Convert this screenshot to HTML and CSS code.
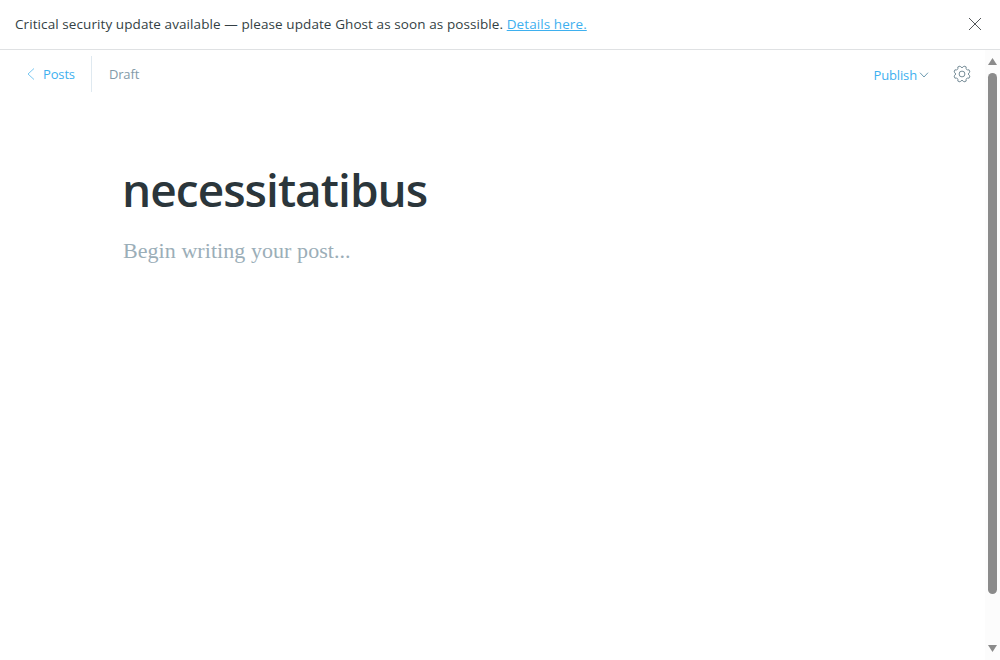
FILE: index.html
```html
<!DOCTYPE html>
<html lang="en">
<head>
<meta charset="utf-8">
<title>Editor</title>
<link rel="stylesheet" href="styles.css">
</head>
<body>
<aside class="alert">
  <div class="alert-text">Critical security update available — please update Ghost as soon as possible. <a class="alert-link" href="#">Details here.</a></div>
  <button class="icon-button close" aria-label="Close">
    <svg width="14" height="14" viewBox="0 0 14 14"><path d="M1 1l12 12M13 1L1 13"/></svg>
  </button>
</aside>
<div class="workspace">
  <main class="editor">
    <header class="toolbar">
      <a class="back" href="#"><svg width="8" height="12" viewBox="0 0 8 12"><path d="M7 .5L1 6l6 5.500"/></svg><span class="back-label">Posts</span></a>
      <span class="status">Draft</span>
      <div class="actions">
        <a class="publish" href="#"><span class="publish-label">Publish</span><svg width="10" height="6" viewBox="0 0 10 6"><path d="M1 .7l4 4.300 4-4.300"/></svg></a>
        <button class="icon-button settings" aria-label="Settings">
          <svg width="18" height="18" viewBox="0 0 18 18"><circle cx="9" cy="9" r="2.900"/><path d="M16.940 11.050L16.070 13.160Q12.460 12.460 13.160 16.070L11.050 16.940Q9 13.900 6.950 16.940L4.840 16.070Q5.540 12.460 1.930 13.160L1.060 11.050Q4.100 9 1.060 6.950L1.930 4.840Q5.540 5.540 4.840 1.930L6.950 1.060Q9 4.100 11.050 1.060L13.160 1.930Q12.460 5.540 16.070 4.840L16.940 6.950Q13.900 9 16.940 11.050Z"/></svg>
        </button>
      </div>
    </header>
    <article class="post">
      <h1 class="title">necessitatibus</h1>
      <p class="placeholder">Begin writing your post...</p>
    </article>
  </main>
  <div class="scrollbar">
    <svg width="9" height="7" viewBox="0 0 9 7"><path d="M4.500 0L9 7H0z"/></svg>
    <div class="thumb"></div>
    <svg class="down" width="9" height="7" viewBox="0 0 9 7"><path d="M4.500 7L0 0h9z"/></svg>
  </div>
</div>
</body>
</html>
```
FILE: styles.css
```css
* { box-sizing: border-box; }
body {
  display: flex;
  flex-direction: column;
  height: 660px;
  margin: 0;
  overflow: hidden;
  background: #fff;
  font-family: "Open Sans", "Noto Sans", sans-serif;
}
a { color: #3eb0ef; text-decoration: none; }
svg { display: block; flex: none; fill: none; stroke: currentColor; }
.alert {
  display: flex;
  align-items: center;
  justify-content: space-between;
  height: 50px;
  padding: 0 18px 2px 15px;
  border-bottom: 1px solid #dfe1e3;
  color: #343f44;
  font-size: 13.5px;
  white-space: nowrap;
}
.alert-text { padding-top: 1px; letter-spacing: 0.085px; }
.alert-link { text-decoration: underline; }
.icon-button { padding: 0; border: 0; background: none; }
.close { color: #54575a; }
.workspace { display: flex; flex: 1; }
.editor { flex: 1; }
.toolbar {
  display: flex;
  align-items: center;
  height: 48px;
  padding: 0 14px 0 27px;
  font-size: 13px;
  letter-spacing: -0.15px;
}
.back {
  display: flex;
  align-items: center;
  height: 36px;
  padding-right: 16px;
  border-right: 1px solid #dfe9f0;
}
.back svg { color: #79c7f1; }
.back-label { margin-left: 8px; }
.status { margin-left: 17px; color: #839aa8; }
.actions { display: flex; align-items: center; margin-left: auto; }
.publish { display: flex; align-items: center; padding-top: 2px; }
.publish svg { margin-left: 2px; color: #6d9bb0; }
.settings { margin-left: 24px; color: #667f8b; }
.settings svg { stroke-width: 0.9; stroke-linejoin: round; }
.post { padding: 59px 0 0 123px; }
.title {
  margin: 0 0 0 -1px;
  color: #2b363b;
  font-size: 46px;
  font-weight: 600;
  letter-spacing: -0.97px;
  line-height: 64px;
}
.placeholder {
  margin: 14px 0 0;
  color: #9baeb8;
  font-family: Georgia, "Liberation Serif", serif;
  font-size: 22px;
  letter-spacing: 0.06px;
  line-height: 32px;
}
.scrollbar {
  display: flex;
  flex-direction: column;
  align-items: center;
  width: 15px;
  padding: 8px 0 8px;
  background: #fcfcfc;
}
.scrollbar svg { fill: #8b8b8b; stroke: none; }
.thumb { width: 9px; height: 521px; margin-top: 8px; border-radius: 5px; background: #8b8b8b; }
.down { margin-top: auto; }
```
